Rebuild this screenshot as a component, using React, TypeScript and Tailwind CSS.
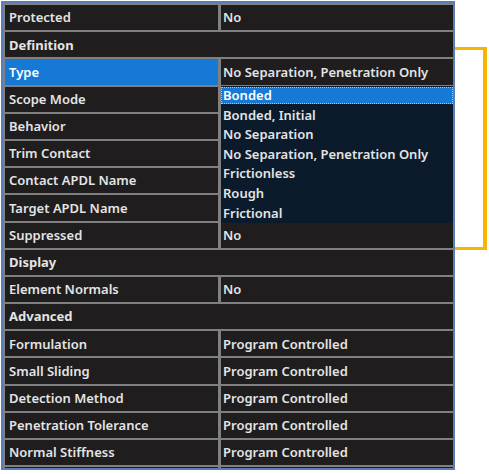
import React from 'react';

type Row =
  | { kind: 'header'; label: string }
  | { kind: 'prop'; label: string; value: string; selected?: boolean };

const rows: Row[] = [
  { kind: 'prop', label: 'Protected', value: 'No' },
  { kind: 'header', label: 'Definition' },
  { kind: 'prop', label: 'Type', value: 'No Separation, Penetration Only', selected: true },
  { kind: 'prop', label: 'Scope Mode', value: '' },
  { kind: 'prop', label: 'Behavior', value: '' },
  { kind: 'prop', label: 'Trim Contact', value: '' },
  { kind: 'prop', label: 'Contact APDL Name', value: '' },
  { kind: 'prop', label: 'Target APDL Name', value: '' },
  { kind: 'prop', label: 'Suppressed', value: 'No' },
  { kind: 'header', label: 'Display' },
  { kind: 'prop', label: 'Element Normals', value: 'No' },
  { kind: 'header', label: 'Advanced' },
  { kind: 'prop', label: 'Formulation', value: 'Program Controlled' },
  { kind: 'prop', label: 'Small Sliding', value: 'Program Controlled' },
  { kind: 'prop', label: 'Detection Method', value: 'Program Controlled' },
  { kind: 'prop', label: 'Penetration Tolerance', value: 'Program Controlled' },
  { kind: 'prop', label: 'Normal Stiffness', value: 'Program Controlled' },
  // sliver of the next row, cut off by the panel edge
  { kind: 'prop', label: '', value: '' },
];

const options = [
  'Bonded',
  'Bonded, Initial',
  'No Separation',
  'No Separation, Penetration Only',
  'Frictionless',
  'Rough',
  'Frictional',
];

export default function App() {
  return (
    <div
      className="relative h-[474px] w-[489px] overflow-hidden bg-white text-[13px] font-semibold text-[#e4e4e4]"
      style={{ fontFamily: '"Noto Sans", "Open Sans", sans-serif' }}
    >
      {/* Details panel */}
      <div className="ml-[1px] mt-[1px] h-[469px] w-[454px] overflow-hidden border-2 border-[#5a7db5] bg-[#808080]">
        <div className="flex flex-col gap-[2px] pl-[2px] pt-[2px]">
          {rows.map((row, i) =>
            row.kind === 'header' ? (
              <div key={i} className="flex h-[25.2px] shrink-0 items-center bg-[#1f1d1e] pl-[4px] pt-[1px] font-bold">
                {row.label}
              </div>
            ) : (
              <div key={i} className="flex h-[25.2px] shrink-0 gap-[3px]">
                <div
                  className={
                    row.selected
                      ? 'flex w-[213px] items-center bg-[#1679d6] pl-[4px] pt-[1px] text-white'
                      : 'flex w-[213px] items-center bg-[#1f1d1e] pl-[4px] pt-[1px]'
                  }
                >
                  {row.label}
                </div>
                <div className="flex flex-1 items-center bg-[#1f1d1e] pl-[2px] pt-[1px]">{row.value}</div>
              </div>
            )
          )}
        </div>
      </div>

      {/* Open dropdown list */}
      <div className="absolute left-[220px] top-[86px] flex h-[137px] w-[233px] flex-col border-l border-[#808080] bg-[#0b1b2b]">
        {options.map((opt, i) =>
          i === 0 ? (
            <div key={opt} className="flex h-[19.6px] flex-col justify-center">
              <div className="flex h-[17px] items-center border border-dotted border-[#9cc8f0] bg-[#1679d6] pl-[1px] text-white">
                {opt}
              </div>
            </div>
          ) : (
            <div key={opt} className="flex h-[19.6px] items-center pl-[2px]">
              {opt}
            </div>
          )
        )}
      </div>

      {/* Orange bracket annotation */}
      <div className="absolute left-[455px] top-[47px] h-[203px] w-[32px] border-y-[3px] border-r-[4px] border-[#f7b500]" />
    </div>
  );
}
